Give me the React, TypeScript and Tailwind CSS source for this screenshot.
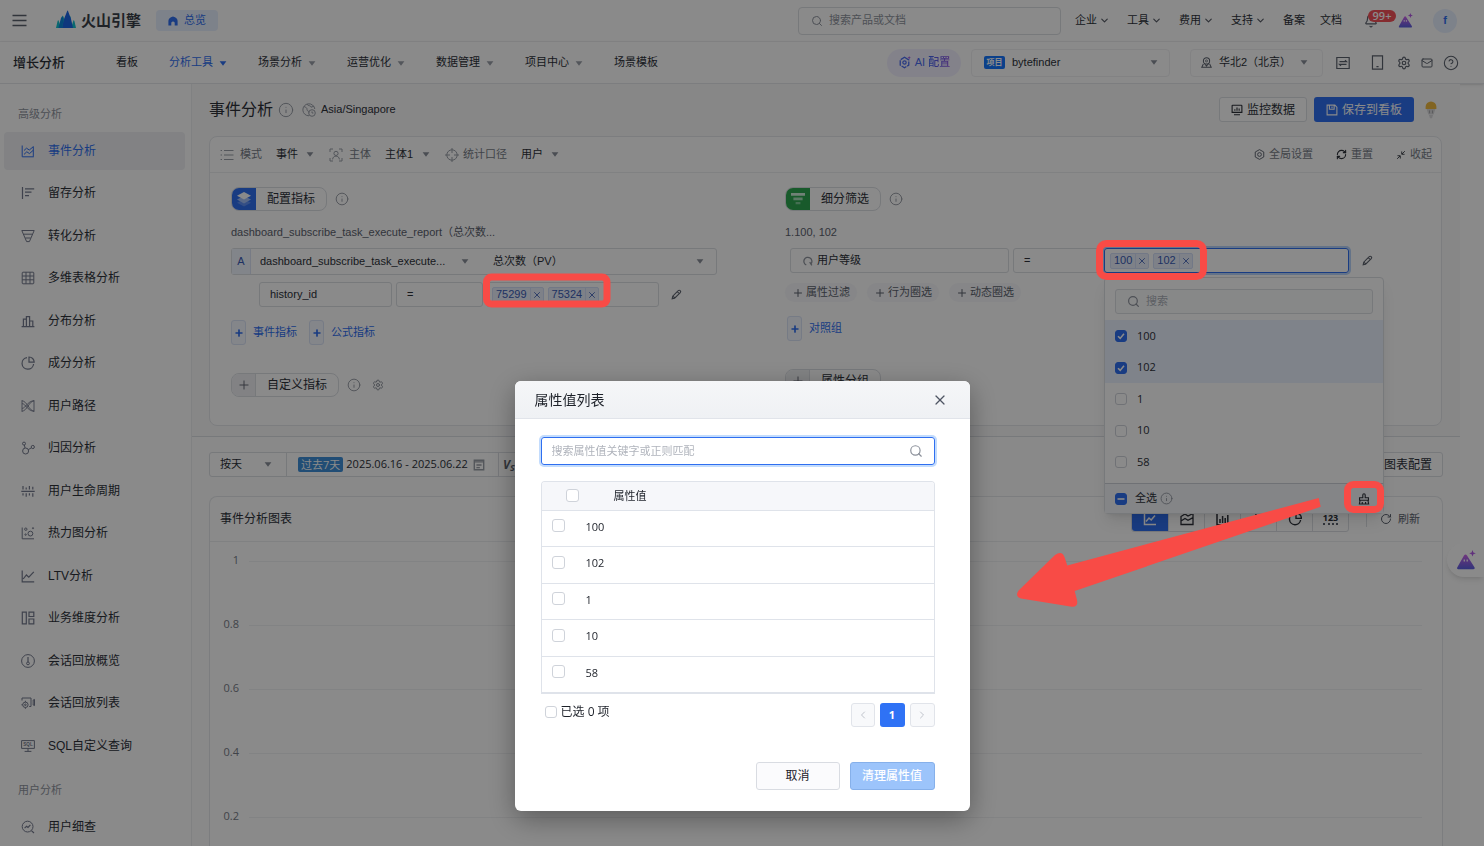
import { useState, type ReactNode } from "react";
import { Bell, ChevronDown, ChevronLeft, ChevronRight, CircleHelp, Info, Mail, Plus, RefreshCw, RotateCw, Search, Settings, X } from "lucide-react";
import clsx from "clsx";

const VALUES = ["100", "102", "1", "10", "58"];

function Glyph({ size = 14, className, children }: { size?: number; className?: string; children: ReactNode }) {
  return (
    <svg width={size} height={size} viewBox="0 0 14 14" fill="none" stroke="currentColor" strokeWidth="1" className={clsx("shrink-0", className)} aria-hidden="true">
      {children}
    </svg>
  );
}

function Caret({ className }: { className?: string }) {
  return (
    <svg width="8" height="5" viewBox="0 0 8 5" className={clsx("shrink-0 pointer-events-none", className)} aria-hidden="true">
      <path d="M0.6 0.3h6.8L4 4.8z" fill="currentColor" />
    </svg>
  );
}

function Pencil() {
  return (
    <Glyph size={11} className="text-[#5c626e]">
      <path d="M1.5 12.5l.7-3.4 7-7a1.7 1.7 0 0 1 2.6 2.4l-7.2 7.2zM8 3.4l2.5 2.4M2.4 9l2.4 2.4" strokeWidth="1.4" />
    </Glyph>
  );
}

function Mountain({ size }: { size: number }) {
  return (
    <svg width={size} height={size} viewBox="0 0 20 20" className="shrink-0" aria-hidden="true">
      <defs>
        <linearGradient id="peak" x1="0" y1="0" x2="0" y2="1">
          <stop offset="0" stopColor="#d065ea" />
          <stop offset="1" stopColor="#5a5fe0" />
        </linearGradient>
      </defs>
      <path d="M1.2 17.5L8 5.6q1.5-2.4 3 0l7.6 11.9q.6 1.7-1.2 1.7H2.2q-1.7 0-1-1.7z" fill="url(#peak)" />
      <path d="M8.3 9.4v2.2M11.2 9.4v2.2" stroke="#fff" strokeWidth="1.3" />
      <path d="M16.5 0l.9 2.4 2.4.9-2.4.9-.9 2.4-.9-2.4-2.4-.9 2.4-.9z" fill="#b45be6" />
    </svg>
  );
}

function Select({ label, value, className, caret = "right-0", pad = "pr-4" }: { label: string; value: string; className?: string; caret?: string; pad?: string }) {
  return (
    <div className={clsx("relative flex items-center", className)}>
      <select aria-label={label} className={clsx("w-full h-full appearance-none bg-transparent outline-none truncate", pad)}>
        <option>{value}</option>
      </select>
      <Caret className={clsx("absolute text-[#8a8f99]", caret)} />
    </div>
  );
}

function Checkbox({ checked, mixed, label, size = "w-3 h-3", onChange }: { checked?: boolean; mixed?: boolean; label: string; size?: string; onChange?: () => void }) {
  const on = checked || mixed;
  return (
    <span className={clsx("relative inline-flex shrink-0", size)}>
      <input
        type="checkbox"
        aria-label={label}
        checked={!!on}
        onChange={onChange ?? (() => {})}
        className={clsx("appearance-none w-full h-full rounded-[3px] border", on ? "bg-[#2f6ff0] border-[#2f6ff0]" : "bg-white border-[#cfd3da]")}
      />
      {on && (
        <svg viewBox="0 0 12 12" className="absolute inset-0 pointer-events-none" fill="none" stroke="#fff" strokeWidth="1.6">
          <path d={mixed ? "M2.5 6h7" : "M3 6.2l2.2 2.2L9 3.8"} />
        </svg>
      )}
    </span>
  );
}

function Chip({ text }: { text: string }) {
  return (
    <span className="flex items-center h-4 rounded-[2px] border border-[#d3def7] bg-[#e9effc] text-[#3a5cb5]">
      <span className="px-[3px]">{text}</span>
      <button type="button" aria-label={`移除 ${text}`} className="w-[13px] h-full border-l border-[#d3def7] flex items-center justify-center">
        <X size={10} strokeWidth={2} />
      </button>
    </span>
  );
}

function SectionTag({ icon, color, text }: { icon: ReactNode; color: string; text: string }) {
  return (
    <div className="flex h-6 rounded-lg border border-[#dcdfe4] overflow-hidden text-xs text-[#2d3139]">
      <span className={clsx("w-6 flex items-center justify-center", color)}>{icon}</span>
      <span className="flex items-center px-[11px]">{text}</span>
    </div>
  );
}

function AddLink({ text }: { text: string }) {
  return (
    <button type="button" className="flex items-center gap-[7px] text-[#2f6ff0]">
      <span className="w-[15px] h-[25px] rounded-[3px] border border-[#dbe4f6] bg-[#f4f7ff] flex items-center justify-center">
        <Plus size={10} strokeWidth={4} />
      </span>
      {text}
    </button>
  );
}

const SIDE_ITEMS: { text: string; icon: ReactNode }[] = [
  { text: "事件分析", icon: <path d="M1.2 1.5v11.3h11.6M3 6.5l2.5-2.3 2.8 1.8 4-3.3M3 10.4l2.8-2.6 2.7 1.8 3.8-3.4M12.3 2.5v10" /> },
  { text: "留存分析", icon: <path d="M1.5 1v12M4 2.8h9.2M4 6.2h6.5M4 9.6h4" strokeWidth="1.2" /> },
  { text: "转化分析", icon: <path d="M.8 1.5h12.4L8.4 12.6H5.6zM2.6 5.2h8.8M4.3 9h5.4" /> },
  { text: "多维表格分析", icon: <path d="M2 1.2h10q.8 0 .8.8v10q0 .8-.8.8H2q-.8 0-.8-.8V2q0-.8.8-.8zM1.2 5h11.6M1.2 8.8h11.6M5 1.2v11.6M9 1.2v11.6" /> },
  { text: "分布分析", icon: <path d="M.6 12.6h12.8M2.4 12.4V5.2h2.8M5.4 12.4V2.6h3.2v9.8M8.8 7h3v5.4" strokeWidth="1.2" /> },
  { text: "成分分析", icon: <path d="M6 1.6A5.8 5.8 0 1 0 12.6 8M8 1v5.2h5.2A5.2 5.2 0 0 0 8 1z" strokeWidth="1.2" /> },
  { text: "用户路径", icon: <path d="M1 1.2v11.6M13 1.2v11.6M1 1.8c5 .2 7 10 12 10.4M1 4.6c4 .2 5 7.2 12 7.6M1 12.2c5-.2 7-10 12-10.4M1 9.4c4-.2 5-7.2 12-7.6" strokeWidth=".9" /> },
  { text: "归因分析", icon: <><circle cx="3" cy="2.6" r="1.5" /><circle cx="4.6" cy="10" r="3" /><circle cx="11.8" cy="6" r="1.6" /><path d="M3.4 4l.6 3M7.3 8.6l3-1.7" /></> },
  { text: "用户生命周期", icon: <path d="M.3 7.4h13.4M2 2v3.6M5.2 3.4v2.2M8.4 2v3.6M11.8 2.8v2.8M2 9.2v2.2M5.2 9.2v3.6M8.4 9.2v2.4M11.8 9.2v3.6" strokeWidth="1.2" /> },
  { text: "热力图分析", icon: <><path d="M1.2 1.5v11.3h11.8" /><circle cx="4.8" cy="3.2" r="1.2" /><circle cx="9.4" cy="7.6" r="2.4" /><circle cx="4.6" cy="8.6" r=".7" /><circle cx="12" cy="2.2" r=".6" /></> },
  { text: "LTV分析", icon: <path d="M1.2 1.5v11.3h12M2.2 10l3.2-4 2.4 2.2 5-5.4" strokeWidth="1.2" /> },
  { text: "业务维度分析", icon: <path d="M1.3 1.2h4v11.6h-4zM8 1.2h4.8v4.3H8zM8 8h4.8v4.8H8z" strokeWidth="1.2" /> },
  { text: "会话回放概览", icon: <><circle cx="7" cy="7" r="6.4" /><circle cx="7" cy="9.4" r="1.4" /><path d="M7 3v5" strokeWidth="1.2" /></> },
  { text: "会话回放列表", icon: <><path d="M1 4.5V2h9v8.5H8.2M12.2 4v5l1.3.6V3.4z" /><circle cx="4.4" cy="8.8" r="2.7" /><circle cx="4.4" cy="8.8" r=".8" /><path d="M4.4 4.8v1.4M4.4 11.4v1.4M.4 8.8h1.4" /></> },
  { text: "SQL自定义查询", icon: <><path d="M.6 1.6h12.8v7.8H.6zM7 9.4v3M3.6 12.4h6.8" /><text x="7" y="7.2" fontSize="4.6" fontWeight="700" textAnchor="middle" fill="currentColor" stroke="none">SQL</text></> },
];

function SideLink({ text, icon, active }: { text: string; icon: ReactNode; active?: boolean }) {
  return (
    <a href="#" className={clsx("h-[38px] pl-[17px] flex items-center gap-[13px] rounded text-xs", active ? "bg-[#f0f1f4] text-[#2f6ff0]" : "text-[#2d3139]")}>
      <Glyph className={active ? "" : "text-[#757b8e]"}>{icon}</Glyph>
      {text}
    </a>
  );
}

function Sidebar() {
  return (
    <nav className="w-48 shrink-0 border-r border-[#eceef1] bg-white px-1 text-[#2d3139]">
      <p className="h-12 pt-3.5 pl-3.5 leading-8 text-[11px] text-[#8f949e]">高级分析</p>
      <ul>
        {SIDE_ITEMS.map((item, i) => (
          <li key={item.text} className="odd:pb-[4px] even:pb-[5px] pr-[2px]">
            <SideLink {...item} active={i === 0} />
          </li>
        ))}
      </ul>
      <p className="h-[39px] pl-3.5 leading-[42px] text-[11px] text-[#8f949e]">用户分析</p>
      <SideLink text="用户细查" icon={<><circle cx="6.6" cy="6.6" r="5.4" /><path d="M10.4 10.6l2.6 2.4M3.6 8.2l2-2 1.4 1.2 2.4-2.6" strokeWidth="1.2" /></>} />
    </nav>
  );
}

function TopBar() {
  return (
    <header className="h-[42px] shrink-0 border-b border-[#f0f1f3] flex items-center pl-3 pr-[27px] text-[11px] text-[#2d3139]">
      <button type="button" aria-label="菜单" className="mr-[29px] text-[#5c626e]">
        <svg width="15" height="13" viewBox="0 0 15 13" aria-hidden="true"><path d="M.5 1.5h14M.5 6.5h14M.5 11.5h14" stroke="currentColor" strokeWidth="1.4" /></svg>
      </button>
      <a href="#" className="flex items-center gap-[5px]">
        <svg width="20" height="18" viewBox="0 0 20 18" className="-mt-1" aria-hidden="true">
          <path d="M0 18l1.6-7 .7-1 .8 2 1.8 6zM4.2 18L6 7l.8-1.6.9 1.8L10 18z" fill="#14c2cf" />
          <path d="M20 18l-1.6-7-.7-1-.8 2-1.8 6z" fill="#14c2cf" />
          <path d="M15.8 18L14.6 7l-.8-1.6L12 9l-2 9z" fill="#14c2cf" />
          <path d="M6 18l2-9 3-7.6q.6-1.6 1.2 0L15 9l2 9z" fill="#1a66e8" />
          <path d="M2.4 18L5 8l1.4-2 1 3-1 9z" fill="#0c88dd" />
        </svg>
        <span className="text-[15px] leading-5 font-bold text-[#3a3f49]">火山引擎</span>
      </a>
      <a href="#" className="ml-[15px] h-[21px] w-[62px] rounded bg-[#e8f0ff] text-[#2f6ff0] flex items-center justify-center gap-1.5">
        <svg width="10" height="10" viewBox="0 0 10 10" aria-hidden="true"><path d="M5 .4Q9.6 1.6 9.6 5V9.6H6.7V6.4q-1.7-1.6-3.4 0v3.2H.4V5Q.4 1.6 5 .4z" fill="currentColor" /></svg>
        总览
      </a>
      <label className="ml-auto w-[263px] h-7 rounded border border-[#dcdfe4] flex items-center px-3 gap-1.5 text-[#8f949e]">
        <Search size={12} strokeWidth={2} />
        <input placeholder="搜索产品或文档" aria-label="搜索产品或文档" className="flex-1 min-w-0 outline-none placeholder-[#8f949e]" />
      </label>
      <div className="ml-3.5 flex gap-[17px]">
        {["企业", "工具", "费用", "支持"].map((t) => (
          <button key={t} type="button" className="flex items-center gap-[2px]">{t}<ChevronDown size={11} strokeWidth={2.5} className="text-[#555a64]" /></button>
        ))}
        <a href="#">备案</a>
      </div>
      <a href="#" className="ml-[15px]">文档</a>
      <button type="button" aria-label="通知" className="relative ml-[22px]">
        <Bell size={14} className="text-[#5c626e]" />
        <span className="absolute left-1 -top-1 h-3 w-7 rounded-full bg-[#f5525a] text-white text-[11px] leading-3 font-['Open_Sans',sans-serif] font-semibold">99+</span>
      </button>
      <button type="button" aria-label="助手" className="ml-[20px]"><Mountain size={15} /></button>
      <span className="ml-5 w-6 h-6 rounded-full bg-[#e8f0ff] text-[#2f6ff0] font-bold flex items-center justify-center">f</span>
    </header>
  );
}

function NavBar() {
  return (
    <div className="h-[42px] shrink-0 border-b border-[#e6e8eb] flex items-center pl-[13px] pr-[25px] text-[11px] text-[#2d3139] shadow-sm">
      <strong className="text-[13px] font-medium w-[103px]">增长分析</strong>
      <nav className="flex gap-[31px]">
        <a href="#">看板</a>
        {["分析工具", "场景分析", "运营优化", "数据管理", "项目中心"].map((t, i) => (
          <button key={t} type="button" className={clsx("flex items-center gap-1.5", i === 0 && "text-[#2f6ff0]")}>
            {t}<Caret className={clsx("mt-0.5", i !== 0 && "text-[#9a9fa8]")} />
          </button>
        ))}
        <a href="#">场景模板</a>
      </nav>
      <button type="button" className="ml-auto h-7 w-[74px] rounded-full bg-[#f3f1ff] text-[#4a6cf0] font-medium flex items-center justify-center gap-1">
        <Glyph size={13}>
          <path d="M7 1.4L11.6 4.2v5.6L7 12.6 2.4 9.8V4.2z" strokeWidth="1.4" strokeDasharray="6 1" /><circle cx="7" cy="7" r="1.8" strokeWidth="1.3" />
          <path d="M12 0l.5 1.4 1.4.5-1.4.5L12 3.8l-.5-1.4-1.4-.5 1.4-.5z" fill="#a04fe0" stroke="none" />
        </Glyph>
        <span>AI <span className="bg-linear-to-r from-[#3564f0] to-[#8a4fe0] bg-clip-text text-transparent">配置</span></span>
      </button>
      <div className="ml-2.5 w-[199px] h-7 rounded border border-[#f0f1f3] flex items-center pl-3">
        <span className="w-[21px] h-[13px] rounded-[2px] bg-[#1677ff] text-white text-[8px] leading-[13px] text-center font-bold mr-[7px]">项目</span>
        <Select label="项目" value="bytefinder" className="flex-1 h-full" caret="right-[11px]" />
      </div>
      <div className="ml-5 w-[133px] h-7 rounded border border-[#f0f1f3] flex items-center pl-2.5 gap-[7px]">
        <Glyph size={11} className="text-[#5c626e]"><circle cx="7" cy="5" r="4" strokeWidth="1.3" /><circle cx="7" cy="5" r="1.3" /><path d="M4 8l3 3.5L10 8M3 9l-2 4h12l-2-4" strokeWidth="1.3" /></Glyph>
        <Select label="地域" value="华北2（北京）" className="flex-1 h-full" caret="right-3.5" />
      </div>
      <div className="ml-[13px] flex items-center text-[#5c626e]">
        <button type="button" aria-label="切换" className="mr-5"><Glyph><path d="M.8 1.5h12.4v11H.8zM3.5 5.6h7L9 4.2M10.5 8.4h-7L5 9.8" strokeWidth="1.2" /></Glyph></button>
        <button type="button" aria-label="移动端" className="mr-3"><Glyph size={15}><path d="M2.3.8h9.4v12.4H2.3zM6 10.8h2" strokeWidth="1.1" /></Glyph></button>
        <button type="button" aria-label="设置" className="mr-2.5"><Settings size={14} /></button>
        <button type="button" aria-label="消息" className="mr-2.5"><Mail size={12} /></button>
        <button type="button" aria-label="帮助"><CircleHelp size={16} strokeWidth={1.6} /></button>
      </div>
    </div>
  );
}

function PageTitle() {
  return (
    <div className="flex items-center h-[25px] mt-[13px] text-[11px] text-[#2d3139]">
      <h1 className="text-base">事件分析</h1>
      <Info size={16} strokeWidth={1.5} className="ml-[5px] text-[#9a9fa8]" />
      <Glyph className="ml-2 mr-[5px] text-[#9a9fa8]"><path d="M7 12.8A6 6 0 1 1 12.8 6M2 3.5c2 1 3 1 3 3s2 1 2 3M5 1.2c1 2 4 1 4 3l3-1" /><circle cx="10" cy="10" r="3.3" /><path d="M10 8.4V10h1.4" /></Glyph>
      <span>Asia/Singapore</span>
      <button type="button" className="ml-auto w-[88px] h-full rounded-[3px] border border-[#dcdfe4] bg-white flex items-center justify-center gap-1 text-xs">
        <Glyph size={12}><path d="M2 1.5h10q.7 0 .7.7v7.6H1.3V2.2q0-.7.7-.7zM3.5 12.5h7M4.5 8V6M7 8V4M9.5 8V5.2" strokeWidth="1.3" /></Glyph>
        监控数据
      </button>
      <button type="button" className="ml-[7px] w-[100px] h-full rounded-[3px] bg-[#2f6ff0] text-white flex items-center justify-center gap-1 text-xs">
        <Glyph size={12}><path d="M1.3 1.3h9l2.4 2.4v9H1.3zM4 1.6v4.6h5.5V1.6M7 3v2" strokeWidth="1.3" /></Glyph>
        保存到看板
      </button>
      <svg width="12" height="18" viewBox="0 0 12 18" className="ml-[11px] mr-[5px]" aria-hidden="true">
        <path d="M.6 8V5.8a5.4 5.4 0 0 1 10.8 0V8z" fill="#efb940" />
        <path d="M1.6 8h8.8l-1.8 5.6H3.4zM4 14h4l-1 3.2H5z" fill="#d9d9db" />
        <path d="M4.5 9.4v3M7.5 9.4v3" stroke="#aaaaae" />
      </svg>
    </div>
  );
}

function ValueDropdown() {
  return (
    <div className="absolute -left-px top-7 w-[280px] rounded border border-[#dcdfe4] bg-white shadow-lg z-10 font-['Open_Sans','Noto_Sans_CJK_SC',sans-serif] text-[#2d3139]">
      <label className="mx-2.5 mt-[11px] mb-1.5 h-[25px] rounded-[3px] border border-[#dcdfe4] bg-[#fafbfc] flex items-center px-[11px] gap-1.5 text-[#8f949e]">
        <Search size={13} strokeWidth={2.2} />
        <input placeholder="搜索" aria-label="搜索属性值" className="flex-1 min-w-0 outline-none placeholder-[#abb0b8]" />
      </label>
      <ul>
        {VALUES.map((v, i) => (
          <li key={v} className={clsx("odd:h-8 even:h-[31px] px-2.5", i < 2 && "bg-[#ebf2ff]")}>
            <label className="h-full flex items-center gap-[10px] font-medium">
              <Checkbox checked={i < 2} label={v} />{v}
            </label>
          </li>
        ))}
      </ul>
      <div className="mt-[5px] h-[30px] border-t border-[#cdd1d8] bg-[#f4f6fa] flex items-center pl-2.5 pr-[13px]">
        <label className="flex items-center gap-2"><Checkbox mixed label="全选" />全选</label>
        <Info size={13} strokeWidth={1.6} className="ml-[3px] text-[#8f949e]" />
        <button type="button" aria-label="清理属性值" className="ml-auto">
          <Glyph size={12}><path d="M5.6 5.5V2.2a1.4 1.4 0 0 1 2.8 0v3.3h3.8v3H1.8v-3zM2.4 8.6l-.8 4.2h10.8l-.8-4.2M5 12.6v-2M8.8 12.6v-2" strokeWidth="1.3" /></Glyph>
        </button>
      </div>
    </div>
  );
}

function ConfigPanel() {
  const box = "rounded-[3px] border border-[#dcdfe4] flex items-center";
  return (
    <section className="mt-3.5 h-[290px] rounded-lg border border-[#e6e8eb] bg-white text-[11px] text-[#2d3139]">
      <div className="h-9 border-b border-[#eceef1] flex items-center pl-2.5 pr-[9px] text-[#777d88]">
        <Glyph size={14} className="mr-1.5 text-[#9a9fa8]"><path d="M4 2.5h9.5M4 7h9.5M4 11.5h9.5M.6 2.5h1.4M.6 7h1.4M.6 11.5h1.4" strokeWidth="1.1" /></Glyph>
        模式
        <Select label="模式" value="事件" className="ml-3.5 mr-[15px] h-6 text-[#2d3139]" />
        <Glyph size={14} className="mr-1.5 text-[#9a9fa8]"><path d="M1 4V1h3M10 1h3v3M13 10v3h-3M4 13H1v-3M3.6 11.4c.2-4.4 6.6-4.4 6.8 0" /><circle cx="7" cy="5.4" r="2.1" /></Glyph>
        主体
        <Select label="主体" value="主体1" className="ml-3.5 mr-[15px] h-6 text-[#2d3139]" />
        <Glyph size={14} className="mr-1 text-[#9a9fa8]"><circle cx="7" cy="7" r="5.2" /><path d="M7 0v5M7 9v5M0 7h5M9 7h5" /></Glyph>
        统计口径
        <Select label="统计口径" value="用户" className="ml-3.5 h-6 text-[#2d3139]" />
        <button type="button" className="ml-auto flex items-center gap-1">
          <Glyph size={11} className="text-[#5c626e]"><path d="M7 .8l5.4 3v6.4L7 13.2l-5.4-3V3.8z" strokeWidth="1.2" /><circle cx="7" cy="7" r="2.4" strokeWidth="1.2" /></Glyph>全局设置
        </button>
        <button type="button" className="ml-[23px] flex items-center gap-1"><RefreshCw size={11} strokeWidth={2.4} className="text-[#2d3139]" />重置</button>
        <button type="button" className="ml-[23px] flex items-center gap-1">
          <Glyph size={10} className="text-[#2d3139]"><path d="M8 2v4h4M8.4 5.6l4-4M6 12V8H2M5.6 8.4l-4 4" strokeWidth="1.2" /></Glyph>收起
        </button>
      </div>
      <div className="grid grid-cols-[554fr_656fr] pl-[21px] pt-3.5">
        <div>
          <div className="flex items-center">
            <SectionTag
              color="bg-[#2f6ff0]"
              text="配置指标"
              icon={<svg width="16" height="16" viewBox="0 0 16 16" aria-hidden="true"><path d="M8 15.4l-7-3.6 7-3.6 7 3.6z" fill="#5f90f5" /><path d="M8 12.4L1 8.6 8 5l7 3.6z" fill="#a3c1fa" /><path d="M8 1l7 3.8-7 3.8-7-3.8z" fill="#fff" /></svg>}
            />
            <Info size={14} strokeWidth={1.5} className="ml-2 text-[#8f949e]" />
          </div>
          <p className="mt-[11px] leading-5 whitespace-nowrap text-[#5c626e]">dashboard_subscribe_task_execute_report（总次数...</p>
          <div className={clsx(box, "mt-[6px] h-[27px] w-[486px]")}>
            <span className="w-[19px] h-full border-r border-[#dce4f5] bg-[#f0f5ff] text-[#3a5cb5] flex items-center justify-center">A</span>
            <Select label="事件" value="dashboard_subscribe_task_execute..." className="ml-[9px] w-[209px] h-full" />
            <Select label="统计方式" value="总次数（PV）" className="ml-6 flex-1 h-full" caret="right-3" />
          </div>
          <div className="mt-[7px] ml-7 flex items-center h-[25px]">
            <button type="button" className={clsx(box, "h-full w-[133px] px-2.5")}>history_id</button>
            <label className={clsx(box, "h-full w-[87px] ml-1 px-2.5")}>
              <select aria-label="比较方式" className="w-full appearance-none outline-none"><option>=</option></select>
            </label>
            <div className={clsx(box, "h-full w-[173px] ml-[3px] px-[5px] gap-1")}>
              <Chip text="75299" />
              <Chip text="75324" />
              <input aria-label="history_id 的值" className="flex-1 min-w-0 outline-none" />
            </div>
            <button type="button" aria-label="编辑" className="ml-3"><Pencil /></button>
          </div>
          <div className="mt-[13px] flex gap-3">
            <AddLink text="事件指标" />
            <AddLink text="公式指标" />
          </div>
          <div className="mt-[28px] flex items-center">
            <SectionTag color="bg-[#f0f1f4] border-r border-[#dcdfe4]" text="自定义指标" icon={<Plus size={14} strokeWidth={1.6} className="text-[#5c626e]" />} />
            <Info size={14} strokeWidth={1.5} className="ml-2 text-[#8f949e]" />
            <Settings size={12} className="ml-[11px] text-[#8f949e]" />
          </div>
        </div>
        <div>
          <div className="flex items-center">
            <SectionTag
              color="bg-[#2ea650]"
              text="细分筛选"
              icon={<svg width="14" height="12" viewBox="0 0 14 12" aria-hidden="true"><path d="M0 0h14v2.8H0z" fill="#cfeeda" /><path d="M2.4 4.6h9.2v2.6H2.4z" fill="#a9dfbb" /><path d="M4.6 9h4.8v2.2H4.6z" fill="#7fce98" /></svg>}
            />
            <Info size={14} strokeWidth={1.5} className="ml-2 text-[#8f949e]" />
          </div>
          <p className="mt-[11px] leading-5 text-[#5c626e]">1.100, 102</p>
          <div className="mt-[6px] ml-[5px] flex items-center h-[25px]">
            <button type="button" className={clsx(box, "h-full w-[219px] px-3 gap-1")}>
              <Glyph size={10} className="text-[#8f949e]"><path d="M4.6 12.6a5.6 5.6 0 1 1 6.6-1.6M9.4 8.6l3 4.4" strokeWidth="1.8" /></Glyph>
              用户等级
            </button>
            <label className={clsx(box, "h-full w-[91px] ml-1 px-2.5")}>
              <select aria-label="等级比较方式" className="w-full appearance-none outline-none"><option>=</option></select>
            </label>
            <div className="relative h-full w-[245px] rounded-[3px] border border-[#2f6ff0] ring-2 ring-[#b9d4fb] flex items-center px-[5px] gap-1">
              <Chip text="100" />
              <Chip text="102" />
              <input aria-label="用户等级的值" className="flex-1 min-w-0 outline-none" />
              <ValueDropdown />
            </div>
            <button type="button" aria-label="编辑" className="ml-[13px]"><Pencil /></button>
          </div>
          <div className="mt-2.5 flex gap-2.5">
            {["属性过滤", "行为圈选", "动态圈选"].map((t) => (
              <button key={t} type="button" className="h-[19px] px-[7px] rounded-full bg-[#f7f8fb] text-[#5c626e] flex items-center gap-[2px]"><Plus size={12} />{t}</button>
            ))}
          </div>
          <div className="mt-[14px] ml-[2px] flex"><AddLink text="对照组" /></div>
          <div className="mt-[28px] flex">
            <SectionTag color="bg-[#f0f1f4] border-r border-[#dcdfe4]" text="属性分组" icon={<Plus size={14} strokeWidth={1.6} className="text-[#5c626e]" />} />
          </div>
        </div>
      </div>
    </section>
  );
}

const CHART_TYPES: { name: string; icon: ReactNode }[] = [
  { name: "折线图", icon: <path d="M1.5 1.5v11h11.5M3 9.5l3-3.5 2.2 2L12 3.5" strokeWidth="1.5" /> },
  { name: "面积图", icon: <path d="M1 4.5l4-2.5 3 2 5-2.5v11H1zM1 9l4-2.5 3 1.8 5-2.6" strokeWidth="1.3" /> },
  { name: "柱状图", icon: <path d="M1 1.5v11.3h12.5M4 11V7M6.6 11V4M9.2 11V6M11.8 11V3" strokeWidth="1.5" /> },
  { name: "散点图", icon: <path d="M3 3h2M8 6h2M4 9h2" strokeWidth="1.5" /> },
  { name: "饼图", icon: <path d="M6 1.6A5.6 5.6 0 1 0 12.6 8M8 1v5.4h5.4A5.4 5.4 0 0 0 8 1z" strokeWidth="1.4" /> },
];

function ChartSection() {
  return (
    <section className="flex-1 border-t border-[#dcdfe4] bg-[#fdfdfd] px-[17px] pt-[15px] text-[11px] text-[#2d3139] font-['Open_Sans','Noto_Sans_CJK_SC',sans-serif]">
      <div className="flex h-[25px]">
        <div className="flex rounded-[3px] border border-[#dcdfe4] bg-white">
          <Select label="粒度" value="按天" className="w-[76px] pl-2.5" caret="right-3.5" />
          <button type="button" className="border-l border-[#dcdfe4] w-[212px] flex items-center pl-[11px] gap-[3px]">
            <span className="h-[15px] px-[3px] rounded-[2px] bg-[#3d8fd8] text-white leading-[15px]">过去7天</span>
            <span>2025.06.16 - 2025.06.22</span>
            <Glyph size={12} className="ml-0.5 text-[#9a9fa8]"><path d="M1.5 1.5h11v11h-11zM1.5 3.4h11M4 7h6M4 10h4" strokeWidth="1.6" /></Glyph>
          </button>
          <button type="button" className="border-l border-[#dcdfe4] w-9 text-left pl-1 text-xs font-bold italic text-[#5c626e]">V<sub>S</sub></button>
        </div>
        <button type="button" className="ml-auto w-[88px] rounded-[3px] border border-[#dcdfe4] bg-white text-xs flex items-center justify-end pr-2.5">图表配置</button>
      </div>
      <div className="mt-[19px] rounded-t-lg border border-b-0 border-[#e6e8eb] bg-white h-[400px]">
        <div className="h-[45px] border-b border-[#eceef1] flex items-center pl-2.5 pr-[22px]">
          <h2 className="text-xs">事件分析图表</h2>
          <div className="ml-auto flex h-[26px] rounded-[3px] border border-[#dcdfe4]">
            {CHART_TYPES.map((c, i) => (
              <button key={c.name} type="button" aria-label={c.name} className={clsx("w-9 flex items-center justify-center", i === 0 ? "bg-[#2f6ff0] text-white rounded-l-[3px]" : "border-l border-[#dcdfe4]")}>
                <Glyph>{c.icon}</Glyph>
              </button>
            ))}
            <button type="button" className="w-9 border-l border-[#dcdfe4] text-[9px] font-bold leading-none flex items-center justify-center">
              <span className="border-b-2 border-dotted border-[#5c626e] pb-px">123</span>
            </button>
          </div>
          <button type="button" className="ml-[17px] pl-[13px] border-l border-[#dcdfe4] flex items-center gap-1.5 text-[#5c626e]"><RotateCw size={12} strokeWidth={2} />刷新</button>
        </div>
        <div className="pl-2 pr-5 pt-2.5 text-[#777d88]">
          {["1", "0.8", "0.6", "0.4", "0.2"].map((v) => (
            <div key={v} className="h-16 flex items-start gap-2.5">
              <span className="w-[21px] text-right leading-4">{v}</span>
              <span className="flex-1 mt-[9px] border-t border-[#f1f2f4]" />
            </div>
          ))}
        </div>
      </div>
    </section>
  );
}

function ValueDialog() {
  const [selected, setSelected] = useState<string[]>([]);
  const [keyword, setKeyword] = useState("");
  const all = selected.length === VALUES.length;

  function toggle(v: string) {
    setSelected((s) => (s.includes(v) ? s.filter((x) => x !== v) : [...s, v]));
  }
  function toggleAll() {
    setSelected(all ? [] : VALUES);
  }

  return (
    <div role="dialog" aria-label="属性值列表" className="w-[455px] rounded-md bg-white overflow-hidden shadow-[0_8px_28px_rgba(0,0,0,0.35)] text-[11px] text-[#1d2129] font-['Open_Sans','Noto_Sans_CJK_SC',sans-serif]">
      <div className="h-[38px] bg-linear-to-b from-[#f5f6f8] to-[#eff1f4] border-b border-[#e1e4ea] flex items-center justify-between pl-5 pr-[22px]">
        <h2 className="text-sm leading-4">属性值列表</h2>
        <button type="button" aria-label="关闭"><X size={16} strokeWidth={1.8} className="text-[#4e5563]" /></button>
      </div>
      <div className="pt-[18px] pb-[21px] pl-[26px] pr-[35px]">
        <label className="h-7 rounded-[3px] border border-[#2f6ff0] ring-2 ring-[#c3dcfd] flex items-center px-2.5">
          <input value={keyword} onChange={(e) => setKeyword(e.target.value)} placeholder="搜索属性值关键字或正则匹配" aria-label="搜索属性值关键字或正则匹配" className="flex-1 min-w-0 outline-none placeholder-[#b0b4bc]" />
          <Search size={14} strokeWidth={2} className="text-[#8a8f99] mr-px" />
        </label>
        <div className="mt-4 rounded-t border border-b-2 border-[#dfe3ea] overflow-hidden">
          <table className="w-full text-left">
            <thead>
              <tr className="h-7 bg-[#f6f7fa]">
                <th className="w-11 pl-6 align-middle leading-none"><Checkbox label="全部" size="w-[13px] h-[13px]" checked={all} onChange={toggleAll} /></th>
                <th className="pl-7 font-normal">属性值</th>
              </tr>
            </thead>
            <tbody>
              {VALUES.map((v) => (
                <tr key={v} className="h-9 even:h-[37px] border-t border-[#dfe3ea]">
                  <td className="pl-2.5 pb-1 align-middle leading-none"><Checkbox label={v} size="w-[13px] h-[13px]" checked={selected.includes(v)} onChange={() => toggle(v)} /></td>
                  <td className="pb-[2px] font-medium">{v}</td>
                </tr>
              ))}
            </tbody>
          </table>
        </div>
        <div className="mt-[9px] flex items-center h-6">
          <label className="ml-1 mb-1.5 flex items-center gap-1 text-xs"><Checkbox label="已选" />已选 {selected.length} 项</label>
          <div className="ml-auto flex gap-[5px] h-full">
            <button type="button" aria-label="上一页" className="w-6 rounded-[3px] border border-[#e1e4ea] bg-[#f8f9fb] flex items-center justify-center text-[#c0c4cc]"><ChevronLeft size={12} /></button>
            <button type="button" className="w-[25px] rounded-[3px] bg-[#2f72f5] text-white font-bold">1</button>
            <button type="button" aria-label="下一页" className="w-[25px] rounded-[3px] border border-[#e1e4ea] bg-[#f8f9fb] flex items-center justify-center text-[#c0c4cc]"><ChevronRight size={12} /></button>
          </div>
        </div>
        <div className="mt-[35px] flex justify-end gap-2.5 text-xs">
          <button type="button" className="w-[84px] h-7 rounded-[3px] border border-[#d9dce2] bg-[#fbfbfd]">取消</button>
          <button type="button" className="w-[85px] h-7 rounded-[3px] border border-[#86b0ea] bg-[#9cc4fb] text-white font-medium">清理属性值</button>
        </div>
      </div>
    </div>
  );
}

function Marks() {
  return (
    <svg className="fixed inset-0 w-full h-full z-40 pointer-events-none" fill="none" stroke="#f84b46" strokeWidth="7" aria-hidden="true">
      <rect x="486.5" y="277" width="120.5" height="27" rx="5" />
      <rect x="1099.5" y="243.5" width="104" height="33" rx="7" />
      <rect x="1347.5" y="484.5" width="33" height="25" rx="6" />
      <path
        d="M1318.7 498l2 8.8L1074.7 591l2.4 9.4q1.2 6.8-5.2 6.4L1021 598.6q-6.4-2.2-2.4-8L1055 555q7-5 9.6 2.2l2.7 8.2z"
        fill="#f84b46"
        stroke="none"
      />
    </svg>
  );
}

export default function App() {
  return (
    <div className="h-screen overflow-hidden flex flex-col bg-white font-['Liberation_Sans','Noto_Sans_CJK_SC',sans-serif]">
      <TopBar />
      <NavBar />
      <div className="flex-1 min-h-0 flex overflow-hidden">
        <Sidebar />
        <main className="flex-1 min-w-0 mr-6 bg-[#f9f9fa] flex flex-col">
          <div className="pl-[17px] pr-[18px] pb-2.5">
            <PageTitle />
            <ConfigPanel />
          </div>
          <ChartSection />
        </main>
      </div>

      <button type="button" aria-label="智能助手" className="fixed right-0 top-[543px] w-[37px] h-[34px] pl-[9px] rounded-l-full bg-white shadow-md">
        <Mountain size={20} />
      </button>

      <div className="fixed inset-0 z-30 bg-black/46 flex justify-center items-start pt-[381px]">
        <ValueDialog />
      </div>
      <Marks />
    </div>
  );
}
